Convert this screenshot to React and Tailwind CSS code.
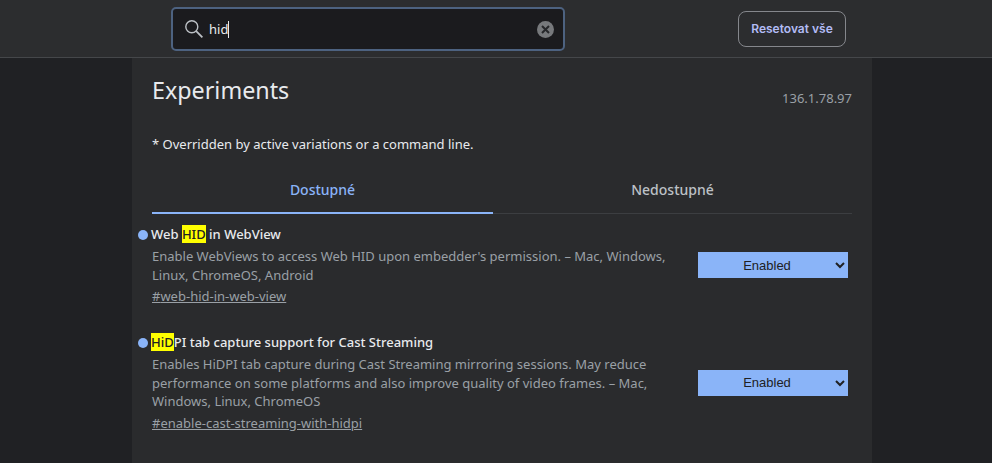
const experiments = [
  {
    id: "web-hid-in-web-view",
    title: (
      <>
        Web <mark className="bg-[#ffff00] text-[#202124]">HID</mark> in WebView
      </>
    ),
    desc: "Enable WebViews to access Web HID upon embedder's permission. – Mac, Windows, Linux, ChromeOS, Android",
  },
  {
    id: "enable-cast-streaming-with-hidpi",
    title: (
      <>
        <mark className="bg-[#ffff00] text-[#202124]">HiD</mark>PI tab capture support for Cast Streaming
      </>
    ),
    desc: "Enables HiDPI tab capture during Cast Streaming mirroring sessions. May reduce performance on some platforms and also improve quality of video frames. – Mac, Windows, Linux, ChromeOS",
  },
];

function Experiment({ item }) {
  return (
    <div className="relative flex items-center justify-between pr-1 mb-[26px]">
      <span className="absolute left-[-14px] top-[6px] w-[10px] h-[10px] rounded-full bg-[#8ab4f8]" />
      <div className="w-[516px]">
        <h2 className="-ml-px text-[13px] leading-[20px] font-medium text-[#e8eaed]">{item.title}</h2>
        <p className="mt-[3px] text-[13px] leading-[18.6px] text-[#9aa0a6]">{item.desc}</p>
        <a className="block mt-[2px] text-[13px] leading-[20px] text-[#9aa0a6] underline">#{item.id}</a>
      </div>
      <select
        defaultValue="Enabled"
        className="w-[150px] h-[26px] bg-[#8ab4f8] text-[#202124] text-[13px] [text-align-last:center] [font-family:'Liberation_Sans',sans-serif] [appearance:auto]"
      >
        <option>Default</option>
        <option>Enabled</option>
        <option>Disabled</option>
      </select>
    </div>
  );
}

export default function App() {
  return (
    <div className="h-[463px] overflow-hidden bg-[#202124] [font-family:'Noto_Sans',sans-serif]">
      {/* Header */}
      <header className="h-[58px] bg-[#2c2d2f] border-b border-[#45474a] flex items-start">
        <div className="ml-[171px] mt-[7px] w-[394px] h-[44px] flex items-center bg-[#1b1b1e] border-2 border-[#4d6280] rounded-[5px] pl-[11px] pr-[9px]">
          <svg width="20" height="20" viewBox="0 0 20 20" fill="none" stroke="#bdc1c6" strokeWidth="1.4" className="shrink-0">
            <circle cx="7.8" cy="7.8" r="6" />
            <path d="M12.2 12.2 18.4 18.4" strokeWidth="1.8" />
          </svg>
          <span className="ml-[5px] text-[13px] text-[#e8eaed] border-r border-[#e8eaed] leading-[17px]">hid</span>
          <span className="ml-auto w-[17px] h-[17px] rounded-full bg-[#77797c] flex items-center justify-center">
            <svg width="9" height="9" viewBox="0 0 9 9" stroke="#26272a" strokeWidth="2">
              <path d="M1 1 8 8M8 1 1 8" />
            </svg>
          </span>
        </div>
        <button className="ml-[173px] mt-[11px] w-[108px] h-[36px] rounded-[8px] border border-[#85878c] text-[12px] font-semibold text-[#b3bcf5] [font-family:Inter,sans-serif]">
          Resetovat vše
        </button>
      </header>

      {/* Content */}
      <main className="ml-[132px] w-[740px] h-[405px] bg-[#2a2b2d] px-[20px]">
        <div className="flex justify-between pt-[15px]">
          <h1 className="text-[23.3px] leading-[34px] text-[#e8eaed]">Experiments</h1>
          <span className="mt-[16px] text-[13px] leading-[18px] text-[#9aa0a6]">136.1.78.97</span>
        </div>
        <p className="mt-[28px] text-[13px] leading-[18px] text-[#e8eaed]">* Overridden by active variations or a command line.</p>

        {/* Tabs */}
        <div className="mt-[19px] flex border-b border-[#3c3e41] h-[42px] mb-[10px]">
          <div className="w-[341px] h-[42px] border-b-2 border-[#8ab4f8] text-center text-[14px] font-medium leading-[36px] text-[#8ab4f8]">Dostupné</div>
          <div className="flex-1 text-center text-[14px] font-medium leading-[36px] text-[#bdc1c6]">Nedostupné</div>
        </div>

        {experiments.map((item) => (
          <Experiment key={item.id} item={item} />
        ))}
      </main>
    </div>
  );
}
